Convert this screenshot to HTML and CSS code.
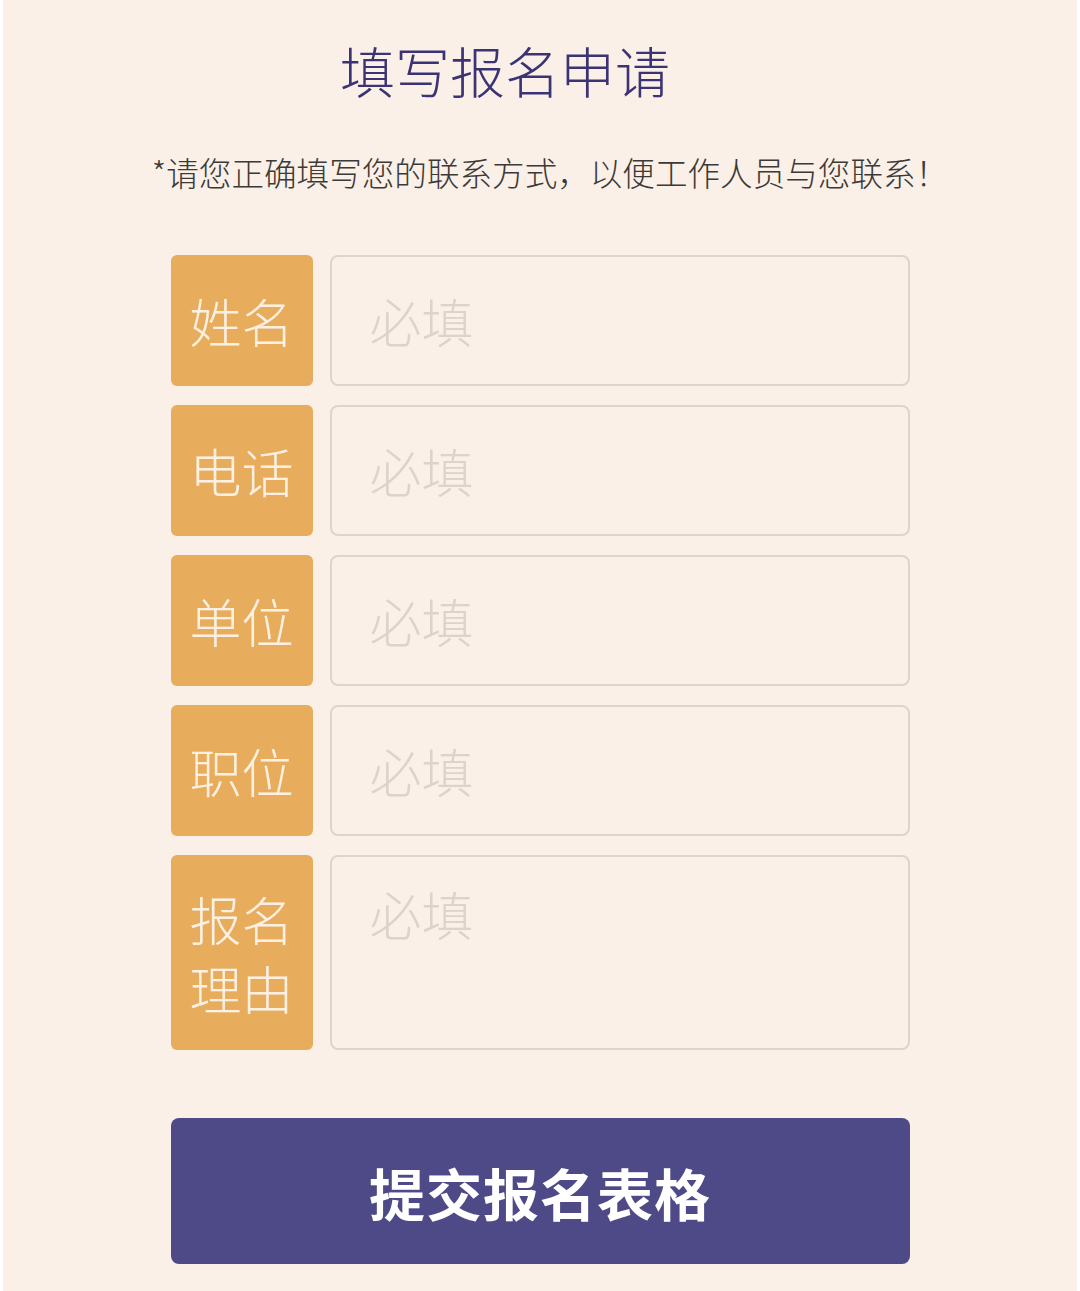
FILE: index.html
```html
<!DOCTYPE html>
<html lang="zh-CN">
<head>
<meta charset="utf-8">
<title>填写报名申请</title>
<link rel="stylesheet" href="styles.css">
</head>
<body>
<div class="page">
  <h1 class="title">填写报名申请</h1>
  <p class="subtitle">*请您正确填写您的联系方式，以便工作人员与您联系！</p>
  <form class="form">
    <div class="row">
      <div class="label">姓名</div>
      <input class="field" type="text" placeholder="必填">
    </div>
    <div class="row">
      <div class="label">电话</div>
      <input class="field" type="text" placeholder="必填">
    </div>
    <div class="row">
      <div class="label">单位</div>
      <input class="field" type="text" placeholder="必填">
    </div>
    <div class="row">
      <div class="label">职位</div>
      <input class="field" type="text" placeholder="必填">
    </div>
    <div class="row row-tall">
      <div class="label label-multi">报名<br>理由</div>
      <textarea class="field field-area" placeholder="必填"></textarea>
    </div>
    <button class="submit" type="button">提交报名表格</button>
  </form>
</div>
</body>
</html>
```

FILE: styles.css
```css
html, body {
  margin: 0;
  padding: 0;
  background: #ffffff;
}

.page {
  margin: 0 3px;
  min-height: 1291px;
  background: #faf0e7;
  font-family: "Noto Sans CJK SC", "Noto Sans", sans-serif;
  overflow: hidden;
}

.title {
  margin: 42px 0 0 0;
  padding-right: 70px;
  text-align: center;
  font-size: 55px;
  line-height: 55px;
  font-weight: 300;
  color: #3b3373;
}

.subtitle {
  margin: 58px 0 0 0;
  text-align: center;
  font-size: 32.6px;
  line-height: 33px;
  font-weight: 300;
  color: #3c3a38;
  padding-left: 20px;
}

.form {
  width: 739px;
  margin: 67px auto 0;
  display: flex;
  flex-direction: column;
  gap: 19px;
}

.row {
  display: flex;
  gap: 17px;
  height: 131px;
}

.row-tall {
  height: 195px;
}

.label {
  width: 142px;
  flex: none;
  background: #e8ad5c;
  border-radius: 6px;
  color: #fbf0e2;
  font-size: 52px;
  line-height: 69px;
  font-weight: 300;
  display: flex;
  align-items: center;
  justify-content: center;
  text-align: center;
}

.field {
  flex: 1 1 0;
  min-width: 0;
  width: 0;
  box-sizing: border-box;
  margin: 0;
  border: 2px solid #ddd4cb;
  border-radius: 8px;
  background: #faf0e7;
  font-family: "Noto Sans CJK SC", "Noto Sans", sans-serif;
  font-size: 52px;
  font-weight: 300;
  color: #333;
  padding: 0 38px;
  outline: none;
  height: 100%;
}

.field::placeholder {
  color: #dcd3ca;
  opacity: 1;
}

.field-area {
  resize: none;
  padding-top: 22px;
  line-height: 70px;
}

.submit {
  margin-top: 49px;
  height: 146px;
  width: 739px;
  border: none;
  border-radius: 8px;
  background: #4e4a88;
  color: #ffffff;
  font-family: "Noto Sans CJK SC", "Noto Sans", sans-serif;
  font-size: 56px;
  font-weight: 700;
  letter-spacing: 1px;
  cursor: pointer;
}
```
